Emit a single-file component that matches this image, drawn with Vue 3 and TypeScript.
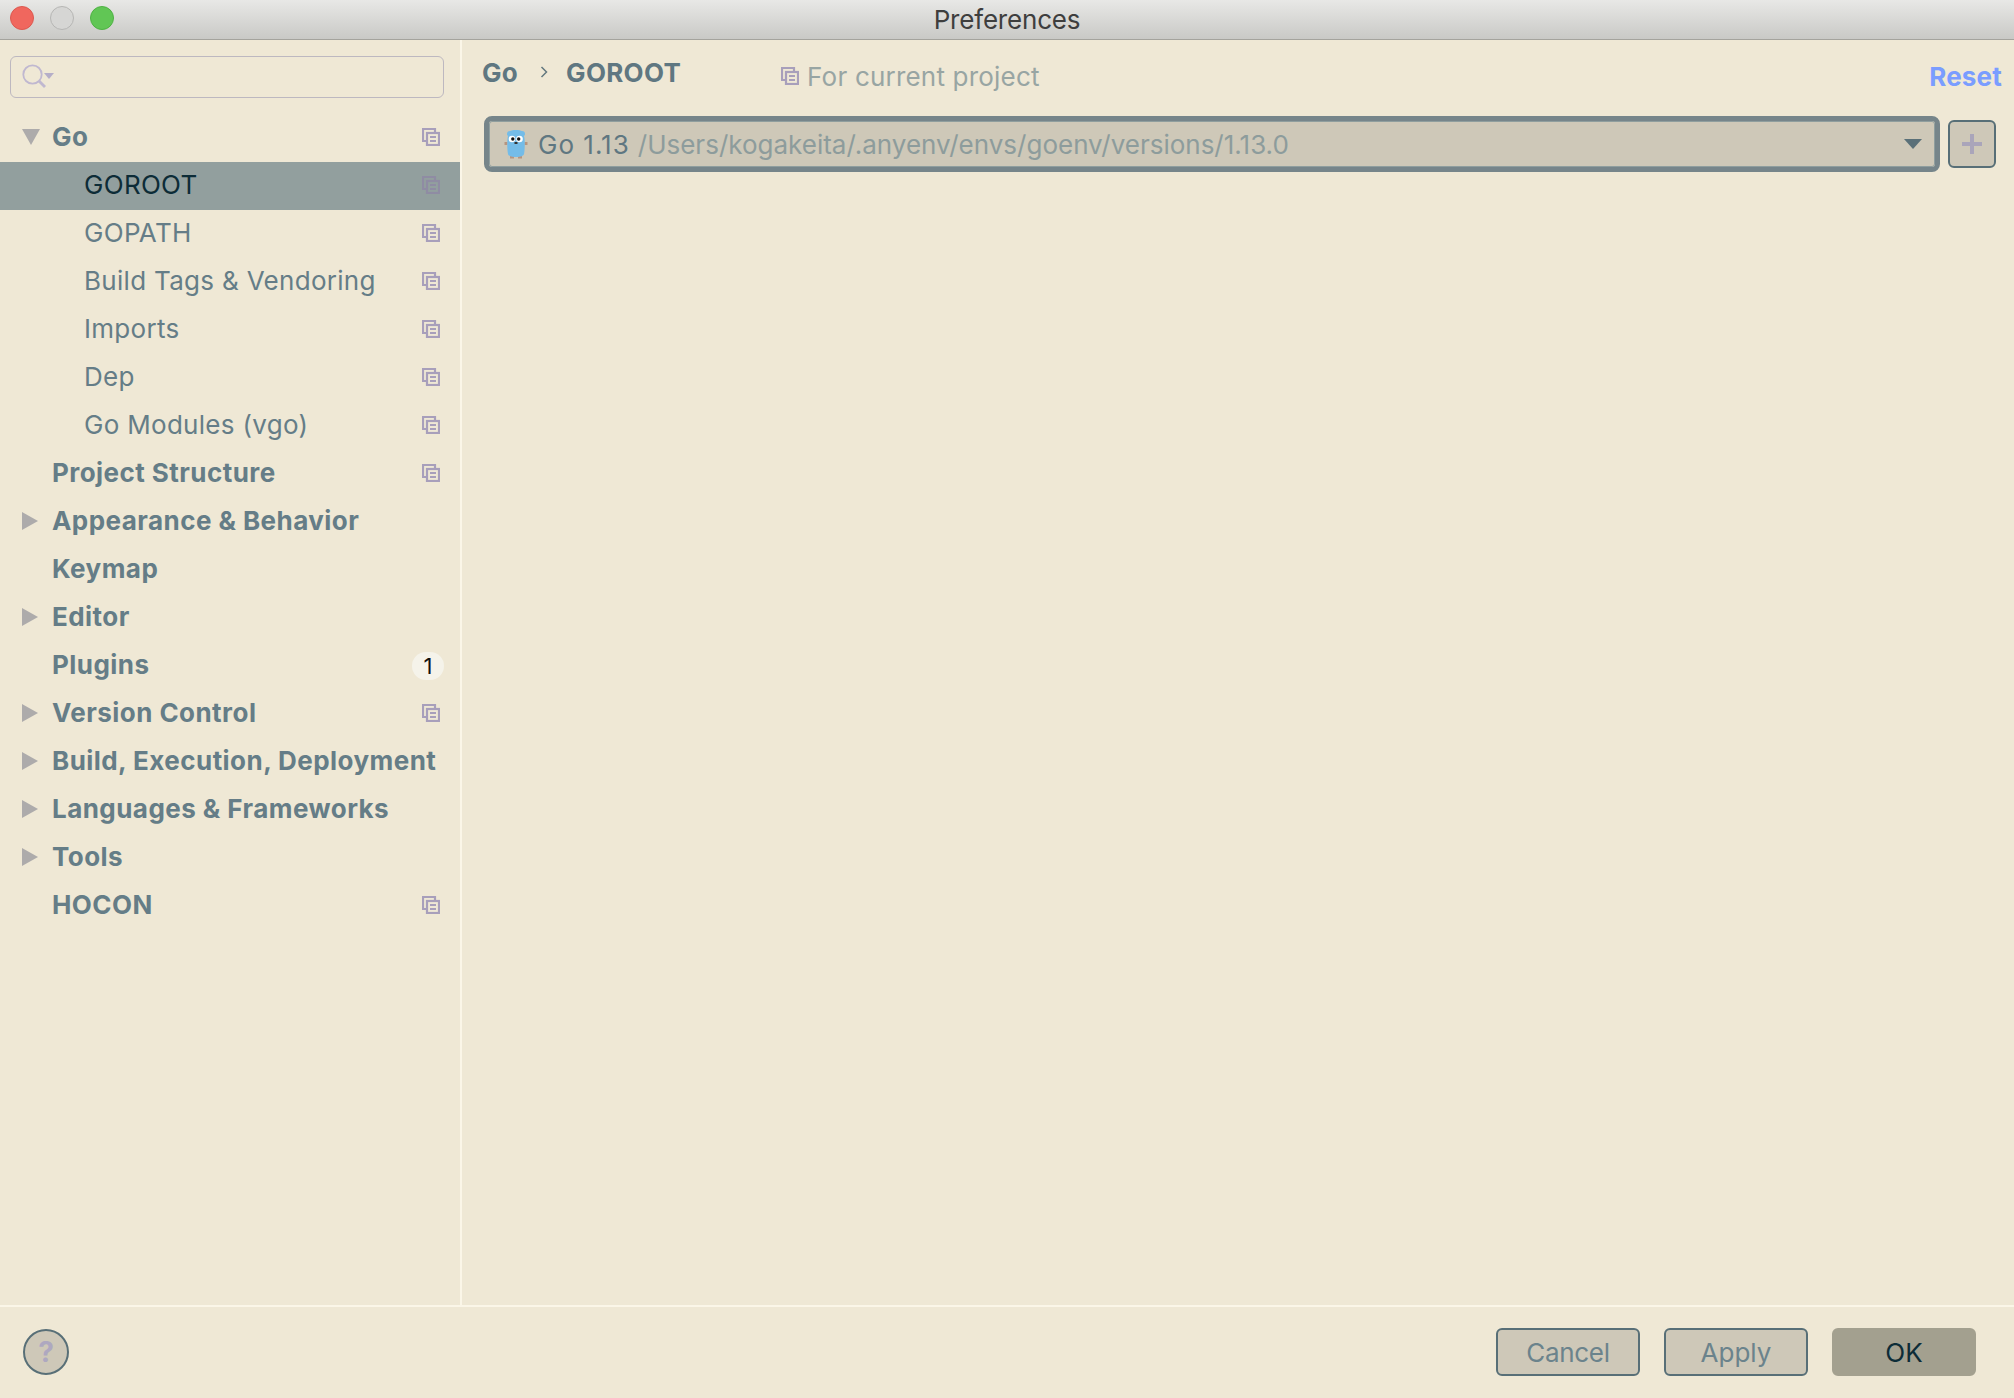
<script setup lang="ts">
interface Row { label: string; level: number; arrow?: 'down' | 'right'; copy?: boolean; selected?: boolean; badge?: string }
const rows: Row[] = [
  { label: 'Go', level: 0, arrow: 'down', copy: true },
  { label: 'GOROOT', level: 1, copy: true, selected: true },
  { label: 'GOPATH', level: 1, copy: true },
  { label: 'Build Tags & Vendoring', level: 1, copy: true },
  { label: 'Imports', level: 1, copy: true },
  { label: 'Dep', level: 1, copy: true },
  { label: 'Go Modules (vgo)', level: 1, copy: true },
  { label: 'Project Structure', level: 0, copy: true },
  { label: 'Appearance & Behavior', level: 0, arrow: 'right' },
  { label: 'Keymap', level: 0 },
  { label: 'Editor', level: 0, arrow: 'right' },
  { label: 'Plugins', level: 0, badge: '1' },
  { label: 'Version Control', level: 0, arrow: 'right', copy: true },
  { label: 'Build, Execution, Deployment', level: 0, arrow: 'right' },
  { label: 'Languages & Frameworks', level: 0, arrow: 'right' },
  { label: 'Tools', level: 0, arrow: 'right' },
  { label: 'HOCON', level: 0, copy: true },
]
</script>

<template>
  <div class="window">
    <header class="titlebar">
      <div class="lights">
        <span class="light red"></span>
        <span class="light gray"></span>
        <span class="light green"></span>
      </div>
      <span class="title">Preferences</span>
    </header>

    <div class="main">
      <aside class="sidebar">
        <div class="search">
          <svg width="26" height="26" viewBox="0 0 26 26" class="search-icon">
            <circle cx="10.500" cy="10.500" r="9.200" fill="none" stroke="#c0b8d0" stroke-width="1.800" />
            <path d="M17 17l6 6" stroke="#c0b8d0" stroke-width="2.800" fill="none" />
            <path d="M22 9h10l-5 6z" fill="#b5aec8" />
          </svg>
        </div>
        <ul class="tree">
          <li v-for="r in rows" :key="r.label" class="row" :class="{ selected: r.selected, child: r.level === 1 }">
            <span class="arrow-slot">
              <svg v-if="r.arrow === 'down'" width="18" height="16" viewBox="0 0 18 16"><path d="M0 0h18l-9 16z" fill="#adabab" /></svg>
              <svg v-else-if="r.arrow === 'right'" width="16" height="18" viewBox="0 0 16 18"><path d="M0 0l16 9-16 9z" fill="#adabab" /></svg>
            </span>
            <span class="label">{{ r.label }}</span>
            <svg v-if="r.copy" class="copy" width="18" height="18" viewBox="0 0 18 18">
              <path d="M4 13H1V1h12v3" fill="none" stroke="currentColor" stroke-width="2.200" />
              <rect x="5" y="5" width="12" height="12" fill="none" stroke="currentColor" stroke-width="2.200" />
              <path d="M8 9h6M8 13h6" stroke="currentColor" stroke-width="2" />
            </svg>
            <span v-if="r.badge" class="badge">{{ r.badge }}</span>
          </li>
        </ul>
      </aside>

      <section class="content">
        <div class="crumbs">
          <span class="crumb">Go</span>
          <svg class="chev" width="8" height="14" viewBox="0 0 8 14"><path d="M1.500 2l5 5-5 5" fill="none" stroke="#63787f" stroke-width="1.500" /></svg>
          <span class="crumb">GOROOT</span>
          <span class="scope">
            <svg class="scope-icon" width="18" height="18" viewBox="0 0 18 18">
              <path d="M4 13H1V1h12v3" fill="none" stroke="#a89fbb" stroke-width="2.200" />
              <rect x="5" y="5" width="12" height="12" fill="none" stroke="#a89fbb" stroke-width="2.200" />
              <path d="M8 9h6M8 13h6" stroke="#a89fbb" stroke-width="2" />
            </svg>
            For current project
          </span>
          <span class="reset">Reset</span>
        </div>
        <div class="sdk">
          <div class="combo">
            <svg class="gopher" width="24" height="30" viewBox="0 0 24 30">
              <path d="M0.500 13h3v3h-3zM20.500 13h3v3h-3z" fill="#b8957f" />
              <path d="M6 27h4v2.500H6zM14 27h4v2.500h-4z" fill="#b8957f" />
              <path d="M3 5a3 3 0 0 1 3-3c2-1.500 10-1.500 12 0a3 3 0 0 1 3 3c0 1-.5 1.500-1 2 1 3 1 13 0 18-.5 2-3 3-8 3s-7.500-1-8-3c-1-5-1-15 0-18-.5-.5-1-1-1-2z" fill="#74bce8" />
              <circle cx="8" cy="10" r="3.300" fill="#fff" />
              <circle cx="15.500" cy="10" r="3.300" fill="#fff" />
              <circle cx="8.800" cy="10" r="1.700" fill="#111" />
              <circle cx="14.700" cy="10" r="1.700" fill="#111" />
              <path d="M10.500 13h3v2h-3z" fill="#333" />
            </svg>
            <span class="sdk-name">Go 1.13</span>
            <span class="sdk-path">/Users/kogakeita/.anyenv/envs/goenv/versions/1.13.0</span>
            <svg class="combo-arrow" width="18" height="10" viewBox="0 0 18 10"><path d="M0 0h18l-9 10z" fill="#5a7078" /></svg>
          </div>
          <div class="add">
            <svg width="20" height="20" viewBox="0 0 20 20"><path d="M8 0h4v8h8v4h-8v8H8v-8H0V8h8z" fill="#aaa5ba" /></svg>
          </div>
        </div>
      </section>
    </div>

    <footer class="footer">
      <div class="help">?</div>
      <div class="actions">
        <button class="btn cancel">Cancel</button>
        <button class="btn">Apply</button>
        <button class="btn primary">OK</button>
      </div>
    </footer>
  </div>
</template>

<style>
html, body { margin: 0; padding: 0; background: #efe8d5; }
</style>

<style scoped>
.window {
  width: 2014px;
  height: 1398px;
  display: flex;
  flex-direction: column;
  background: #efe8d5;
  font-family: Inter, "Liberation Sans", sans-serif;
  font-size: 26px;
  color: #657d87;
  overflow: hidden;
}
.titlebar {
  position: relative;
  height: 39px;
  flex: none;
  background: linear-gradient(#e8e8e6, #c9c9c6);
  border-bottom: 1px solid #a4a39d;
  display: flex;
  align-items: center;
  justify-content: center;
}
.lights {
  position: absolute;
  left: 10px;
  top: 6px;
  display: flex;
  gap: 16px;
}
.light {
  width: 24px;
  height: 24px;
  border-radius: 50%;
  box-sizing: border-box;
}
.red { background: #f0675e; border: 1px solid #dc5950; }
.gray { background: #d6d6d4; border: 1px solid #b6b6b4; }
.green { background: #61c655; border: 1px solid #4fb244; }
.title {
  color: #3e3e3e;
  font-size: 26px;
  letter-spacing: -0.2px;
}
.main {
  flex: 1;
  display: flex;
  min-height: 0;
}
.sidebar {
  width: 460px;
  flex: none;
  border-right: 2px solid #fbf6e8;
  padding-top: 16px;
}
.search {
  margin-left: 10px;
  width: 434px;
  height: 42px;
  box-sizing: border-box;
  border: 1.500px solid #bdb8c0;
  border-radius: 6px;
  display: flex;
  align-items: center;
  padding-left: 11px;
}
.search-icon { overflow: visible; }
.tree {
  list-style: none;
  margin: 16px 0 0;
  padding: 0;
}
.row {
  height: 48px;
  box-sizing: border-box;
  display: flex;
  align-items: center;
  padding: 0 20px 2px 22px;
  color: #657d87;
  font-weight: 700;
  letter-spacing: 0.45px;
}
.row.child { font-weight: 400; letter-spacing: 0.3px; }
.row.selected { background: #929f9e; color: #0d2c37; }
.arrow-slot {
  width: 30px;
  flex: none;
  display: flex;
  align-items: center;
}
.child .arrow-slot { width: 62px; }
.label { flex: 1; white-space: nowrap; padding-bottom: 2px; }
.copy { color: #a89fbb; flex: none; }
.selected .copy { color: #8f8ca3; }
.badge {
  width: 32px;
  height: 28px;
  margin-right: -4px;
  margin-bottom: -2px;
  border-radius: 14px;
  background: #f5f3ea;
  color: #111;
  font-weight: 400;
  font-size: 22px;
  letter-spacing: 0;
  display: flex;
  align-items: center;
  justify-content: center;
  flex: none;
}
.content {
  flex: 1;
  padding: 15px 12px 0 20px;
  min-width: 0;
}
.crumbs {
  position: relative;
  display: flex;
  align-items: center;
  height: 34px;
  white-space: nowrap;
}
.crumb { font-weight: 700; color: #5f7781; letter-spacing: 0.3px; }
.chev { margin: 0 18px 0 22px; }
.scope {
  display: flex;
  align-items: center;
  gap: 8px;
  margin-left: 100px;
  padding-top: 8px;
  color: #98a5a3;
  letter-spacing: 0.2px;
}
.reset {
  margin-left: auto;
  padding-top: 8px;
  padding-right: 0;
  color: #7a9dff;
  font-weight: 700;
  letter-spacing: 0.2px;
}
.sdk {
  margin-top: 27px;
  display: flex;
  align-items: center;
  gap: 8px;
}
.combo {
  width: 1456px;
  margin-left: 2px;
  height: 56px;
  box-sizing: border-box;
  background: #cec8b8;
  border: 5px solid #76858a;
  outline: 1px solid #8f9e9e;
  outline-offset: -6px;
  border-radius: 8px;
  display: flex;
  align-items: center;
  padding-left: 15px;
  padding-right: 13px;
}
.gopher { flex: none; margin-right: 10px; }
.sdk-name { color: #5f7781; margin-right: 8px; white-space: nowrap; letter-spacing: 1px; }
.sdk-path { flex: 1; color: #8d9c9c; white-space: nowrap; }
.combo-arrow { flex: none; }
.add {
  width: 48px;
  height: 48px;
  box-sizing: border-box;
  background: #cec8b8;
  border: 2px solid #586f77;
  border-radius: 6px;
  display: flex;
  align-items: center;
  justify-content: center;
}
.footer {
  flex: none;
  height: 93px;
  box-sizing: border-box;
  border-top: 2px solid #fbf6e8;
  display: flex;
  align-items: center;
  justify-content: space-between;
  padding: 0 38px 1px 23px;
}
.help {
  width: 46px;
  height: 46px;
  box-sizing: border-box;
  border-radius: 50%;
  background: #cec8b8;
  border: 2px solid #586f77;
  color: #aea8c0;
  font-weight: 700;
  font-size: 28px;
  display: flex;
  align-items: center;
  justify-content: center;
}
.actions {
  display: flex;
  gap: 24px;
}
.btn {
  width: 144px;
  height: 48px;
  box-sizing: border-box;
  background: #cec8b8;
  border: 2px solid #586f77;
  border-radius: 6px;
  color: #6b838c;
  font: inherit;
  padding: 0;
}
.btn.cancel { letter-spacing: -0.3px; }
.btn.primary {
  background: #a3a08f;
  border-color: #a3a08f;
  color: #0d2c37;
}
</style>
